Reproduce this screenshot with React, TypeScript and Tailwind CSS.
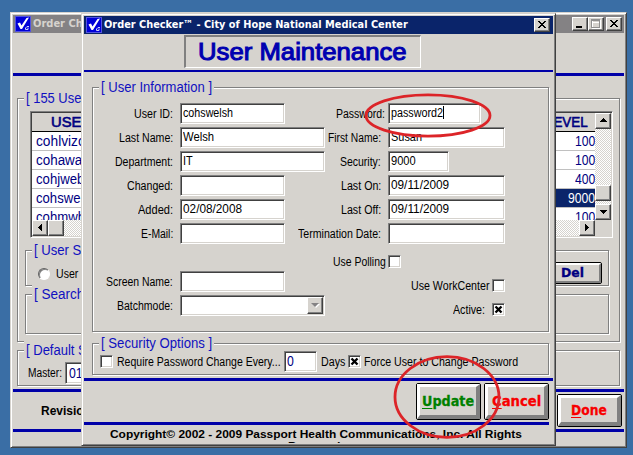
import { useLayoutEffect, useRef, type ReactNode } from "react";

/** Single line of text, condensed or stretched to a fixed width. */
function Fit({ w, className = "", children }: { w: number; className?: string; children: ReactNode }) {
  const ref = useRef<HTMLSpanElement>(null);
  useLayoutEffect(() => {
    const el = ref.current;
    if (el) el.style.transform = `scaleX(${w / el.offsetWidth})`;
  }, [w]);
  return (
    <span className={`inline-block shrink-0 whitespace-nowrap ${className}`} style={{ width: w }}>
      <span ref={ref} className="inline-block origin-left">
        {children}
      </span>
    </span>
  );
}

const sunken =
  "border border-t-[#808080] border-l-[#808080] border-r-white border-b-white shadow-[inset_1px_1px_0_#404040,inset_-1px_-1px_0_#d6d3ce]";
const raised =
  "bg-[#d6d3ce] border border-t-white border-l-white border-r-[#404040] border-b-[#404040] shadow-[inset_-1px_-1px_0_#808080]";
const frame =
  "bg-[#d6d3ce] border border-t-[#d6d3ce] border-l-[#d6d3ce] border-r-[#404040] border-b-[#404040] shadow-[inset_1px_1px_0_#fff,inset_-1px_-1px_0_#808080] p-[2px]";
const hatch = "bg-[repeating-conic-gradient(#fff_0_25%,#d6d3ce_0_50%)] bg-[length:2px_2px]";

function Group({ title, w, className = "", children }: { title?: string; w?: number; className?: string; children?: ReactNode }) {
  return (
    <div className={`relative shrink-0 border border-[#808080] shadow-[1px_1px_0_#fff,inset_1px_1px_0_#fff] ${className}`}>
      {title && (
        <div className="absolute -top-[10px] left-[6px] h-[18px] bg-[#d6d3ce] px-[2px] text-[14px] leading-[18px] text-[#1010c0]">
          <Fit w={w ?? 100}>{title}</Fit>
        </div>
      )}
      {children}
    </div>
  );
}

function Logo() {
  return (
    <svg width="16" height="16" viewBox="0 0 16 16" className="shrink-0">
      <rect width="16" height="16" fill="#0000d8" />
      <rect x=".5" y=".5" width="15" height="15" fill="none" stroke="#a8a8e8" strokeDasharray="1 1" />
      <path d="M2.5 7.5 L5 6.5 L6.5 9.5 L11.5 2 L14 1.5 L7 13 L5.5 13 Z" fill="#fff" />
      <path d="M14 10.5h-2l-1.5 1.5v1.5h2.5v-2" fill="none" stroke="#c8c8ff" />
    </svg>
  );
}

function CaptionButton({ kind }: { kind: "min" | "max" | "close" }) {
  return (
    <div className={`h-[14px] w-[16px] shrink-0 ${raised}`}>
      <svg width="14" height="12" viewBox="0 0 14 12" shapeRendering="crispEdges">
        {kind === "min" && <path d="M3 8h6v2H3z" fill="#000" />}
        {kind === "max" && (
          <>
            <path d="M3.5 2.5h8v8h-8zM3 4h9" fill="none" stroke="#fff" />
            <path d="M2.5 1.5h8v8h-8zM2 2.5h9" fill="none" stroke="#909090" />
          </>
        )}
        {kind === "close" && (
          <path
            d="M3 2h2v1h1v1h2v-1h1v-1h2v1h-1v1h-1v1h-1v1h1v1h1v1h1v1h-2v-1h-1v-1h-2v1h-1v1h-2v-1h1v-1h1v-1h1v-1h-1v-1h-1v-1h-1z"
            fill="#000"
          />
        )}
      </svg>
    </div>
  );
}

function ScrollButton({ d, className = "" }: { d?: string; className?: string }) {
  return (
    <div className={`h-[16px] w-[16px] shrink-0 ${raised} ${className}`}>
      {d && (
        <svg width="14" height="14" viewBox="0 0 14 14" shapeRendering="crispEdges">
          <path d={d} />
        </svg>
      )}
    </div>
  );
}

function Check({ on }: { on?: boolean }) {
  return (
    <div className={`h-[13px] w-[13px] shrink-0 bg-white ${sunken}`}>
      {on && (
        <svg width="11" height="11" viewBox="0 0 11 11">
          <path d="M2.5 2.5 L8.5 8.5 M8.5 2.5 L2.5 8.5" stroke="#000" strokeWidth="2.4" />
        </svg>
      )}
    </div>
  );
}

function Field({ box, value, vw = 0, caret }: { box: string; value?: string; vw?: number; caret?: boolean }) {
  return (
    <div className={`flex h-[21px] shrink-0 items-start bg-white pl-[2px] leading-[18px] ${sunken} ${box}`}>
      {value && <Fit w={vw}>{value}</Fit>}
      {caret && <span className="mt-[2px] h-[13px] w-px bg-black" />}
    </div>
  );
}

type Row = { label: string; lw: number; box: string; value?: string; vw?: number; caret?: boolean; nudge?: boolean };

const leftRows: Row[] = [
  { label: "User ID:", lw: 39, box: "w-[105px]", value: "cohswelsh", vw: 50 },
  { label: "Last Name:", lw: 54, box: "w-[145px]", value: "Welsh", vw: 31 },
  { label: "Department:", lw: 58, box: "w-[145px]", value: "IT", vw: 10 },
  { label: "Changed:", lw: 46, box: "w-[105px]" },
  { label: "Added:", lw: 35, box: "w-[105px]", value: "02/08/2008", vw: 59 },
  { label: "E-Mail:", lw: 32, box: "w-[105px]" },
];

const rightRows: Row[] = [
  { label: "Password:", lw: 49, box: "w-[93px]", value: "password2", vw: 52, caret: true, nudge: true },
  { label: "First Name:", lw: 53, box: "w-[117px]", value: "Susan", vw: 31 },
  { label: "Security:", lw: 41, box: "w-[61px]", value: "9000", vw: 25 },
  { label: "Last On:", lw: 40, box: "w-[117px]", value: "09/11/2009", vw: 58 },
  { label: "Last Off:", lw: 40, box: "w-[117px]", value: "09/11/2009", vw: 58 },
  { label: "Termination Date:", lw: 83, box: "w-[117px]" },
];

function FieldRow({ row, labelBox }: { row: Row; labelBox: string }) {
  return (
    <div className="flex h-[24px]">
      <div className={`flex shrink-0 justify-end leading-[22px] ${labelBox} ${row.nudge ? "mr-[3px] ml-[5px]" : "mr-[7px] ml-px"}`}>
        <Fit w={row.lw}>{row.label}</Fit>
      </div>
      <Field box={row.box} value={row.value} vw={row.vw} caret={row.caret} />
    </div>
  );
}

function BigButton({ text, w, className }: { text: string; w: number; className: string }) {
  return (
    <div className="shrink-0 rounded-[2px] border border-black">
      <div
        className={`flex items-center justify-center border-t-[3px] border-r-4 border-b-4 border-l-[3px] border-t-white border-r-[#808080] border-b-[#808080] border-l-white bg-[#d6d3ce] font-['DejaVu_Sans',sans-serif] text-[14px] font-bold [-webkit-text-stroke:0.3px] ${className}`}
      >
        <Fit w={w}>
          <span className="underline decoration-1 underline-offset-2">{text[0]}</span>
          {text.slice(1)}
        </Fit>
      </div>
    </div>
  );
}

const users = [
  { id: "cohlvizo", w: 50, level: "100", lw: 20 },
  { id: "cohawa", w: 46, level: "100", lw: 20 },
  { id: "cohjweb", w: 48, level: "400", lw: 20 },
  { id: "cohswe", w: 44, level: "9000", lw: 27, selected: true },
  { id: "cohmwh", w: 49, level: "100", lw: 20 },
];

function UserList() {
  return (
    <div className={`mt-[12px] ml-[12px] flex h-[127px] w-[583px] flex-col bg-[#d6d3ce] p-px ${sunken}`}>
      <div className="flex h-[107px]">
        <div className="flex h-[107px] flex-1 flex-col overflow-hidden bg-white text-[14px] text-[#000080]">
          <div className="flex h-[19px] shrink-0 justify-between border-b border-black bg-[#d6d3ce] pr-[7px] pl-[19px] leading-[18px] [-webkit-text-stroke:0.6px]">
            <Fit w={60}>USER ID</Fit>
            <Fit w={42}>LEVEL</Fit>
          </div>
          {users.map((u) => (
            <div key={u.id} className="flex h-[19px] shrink-0 border-b border-[#c0c0c0] leading-[19px]">
              <div className="w-[100px] pl-[4px]">
                <Fit w={u.w}>{u.id}</Fit>
              </div>
              <div className={`flex flex-1 justify-end ${u.selected ? "bg-[#0a246a] text-white" : ""}`}>
                <Fit w={u.lw}>{u.level}</Fit>
              </div>
            </div>
          ))}
        </div>
        <div className={`flex w-[16px] flex-col ${hatch}`}>
          <ScrollButton d="M4 8h7v-1h-1v-1h-1v-1h-1v-1h-1v1h-1v1h-1v1h-1z" />
          <ScrollButton className="mt-auto" />
          <ScrollButton className="mt-[3px]" d="M4 5h7v1h-1v1h-1v1h-1v1h-1v-1h-1v-1h-1v-1h-1z" />
        </div>
      </div>
      <div className="flex h-[16px]">
        <div className={`flex flex-1 ${hatch}`}>
          <ScrollButton d="M9 3v7h-1v-1h-1v-1h-1v-1h-1v-1h1v-1h1v-1h1v-1z" />
          <ScrollButton />
          <ScrollButton className="ml-auto" d="M5 3v7h1v-1h1v-1h1v-1h1v-1h-1v-1h-1v-1h-1v-1z" />
        </div>
        <div className="w-[16px]" />
      </div>
    </div>
  );
}

const caption = "flex h-[18px] shrink-0 items-center pl-[2px] text-white";
const captionFont = "font-['DejaVu_Sans',sans-serif] text-[11px] font-bold leading-[16px]";

function MainWindow() {
  return (
    <div className={`absolute top-[12px] left-[10px] flex h-[436px] w-[617px] flex-col ${frame}`}>
      <div className={`${caption} bg-[#848284] pr-[2px]`}>
        <Logo />
        <Fit w={90} className={`ml-[2px] text-[#d6d3ce] ${captionFont}`}>
          Order Checker™
        </Fit>
        <div className="ml-auto flex">
          <CaptionButton kind="min" />
          <CaptionButton kind="max" />
          <div className="w-[2px]" />
          <CaptionButton kind="close" />
        </div>
      </div>
      <div className="mt-[40px] h-[3px] shrink-0 bg-[#0000a8]" />
      <Group title="[ 155 Users ]" w={73} className="mx-[4px] mt-[22px] h-[244px]">
        <UserList />
        <Group title="[ User Search ]" w={87} className="mt-[12px] mr-[10px] ml-[7px] flex h-[36px]">
          <div className="mt-[17px] ml-[12px] h-[12px] w-[12px] rounded-full border border-t-[#606060] border-r-white border-b-white border-l-[#606060] bg-white shadow-[inset_1px_1px_0_#808080]" />
          <Fit w={22} className="mt-[12px] ml-[6px] leading-[22px]">
            User
          </Fit>
          <div className="mt-[11px] mr-[6px] ml-auto h-[22px] w-[60px] rounded-[2px] border border-black">
            <div className="flex h-[20px] items-center justify-center border-2 border-t-white border-r-[#808080] border-b-[#808080] border-l-white font-['DejaVu_Sans',sans-serif] text-[13px] font-bold text-[#000080] [-webkit-text-stroke:0.3px]">
              <Fit w={23}>Del</Fit>
            </div>
          </div>
        </Group>
        <Group title="[ Search ]" w={58} className="mt-[8px] mr-[10px] ml-[7px] h-[40px]" />
      </Group>
      <Group title="[ Default Settings ]" w={106} className="mx-[4px] mt-[8px] flex h-[36px]">
        <Fit w={34} className="mt-[11px] ml-[10px] leading-[22px]">
          Master:
        </Fit>
        <div className={`mt-[11px] ml-[3px] h-[22px] w-[60px] bg-white pl-[3px] text-[14px] leading-[20px] text-[#000080] ${sunken}`}>
          <Fit w={14}>01</Fit>
        </div>
      </Group>
      <div className="mt-[3px] h-[3px] shrink-0 bg-[#0000a8]" />
      <div className="flex h-[37px] shrink-0 items-center justify-between pr-[2px] pl-[28px]">
        <Fit w={54} className="font-bold">
          Revision:
        </Fit>
        <BigButton text="Done" w={36} className="h-[31px] w-[63px] text-[#f80000]" />
      </div>
      <div className="h-[3px] shrink-0 bg-[#0000a8]" />
    </div>
  );
}

function UserDialog() {
  return (
    <div className={`absolute top-[13px] left-[81px] flex h-[433px] w-[475px] flex-col ${frame}`}>
      <div className={`${caption} bg-[#0a246a] pr-[3px]`}>
        <Logo />
        <Fit w={304} className={`ml-[2px] ${captionFont}`}>
          Order Checker™ - City of Hope National Medical Center
        </Fit>
        <div className="ml-auto flex">
          <CaptionButton kind="close" />
        </div>
      </div>
      <div className="mt-px ml-[100px] flex h-[33px] w-[237px] shrink-0 items-center border-t-2 border-r border-b border-l-2 border-t-[#808080] border-r-white border-b-white border-l-[#808080] pl-[12px] text-[23px] leading-[30px] text-[#0000b0] [-webkit-text-stroke:1px]">
        <Fit w={209}>User Maintenance</Fit>
      </div>
      <div className="mt-[2px] h-[2px] shrink-0 bg-[#0000a8]" />
      <Group title="[ User Information ]" w={111} className="mr-[4px] ml-[8px] mt-[15px] flex h-[245px]">
        <div className="w-[232px] shrink-0 pt-[15px]">
          {leftRows.map((row) => (
            <FieldRow key={row.label} row={row} labelBox="w-[79px]" />
          ))}
          <div className="h-[24px]" />
          <FieldRow row={{ label: "Screen Name:", lw: 67, box: "w-[105px]" }} labelBox="w-[79px]" />
          <div className="flex h-[24px]">
            <div className="mr-[7px] flex w-[80px] justify-end leading-[22px]">
              <Fit w={56}>Batchmode:</Fit>
            </div>
            <div className={`flex h-[21px] w-[145px] shrink-0 justify-end bg-white p-px ${sunken}`}>
              <div className="flex h-[17px] w-[16px] items-center justify-center border border-t-white border-r-[#404040] border-b-[#404040] border-l-white bg-[#d6d3ce] shadow-[inset_-1px_-1px_0_#808080]">
                <svg width="9" height="5" viewBox="0 0 9 5">
                  <path d="M1.5 1h7.5l-4 4z" fill="#fff" />
                  <path d="M0 0h8l-4 4z" fill="#848284" />
                </svg>
              </div>
            </div>
          </div>
        </div>
        <div className="flex-1 pt-[15px]">
          {rightRows.map((row) => (
            <FieldRow key={row.label} row={row} labelBox="w-[55px]" />
          ))}
          <div className="ml-[8px] flex h-[24px] items-center pt-[5px]">
            <Fit w={53}>Use Polling</Fit>
            <span className="ml-[2px]">
              <Check />
            </span>
          </div>
          <div className="ml-[86px] flex h-[24px] items-center pt-[5px]">
            <Fit w={78}>Use WorkCenter</Fit>
            <span className="ml-[3px]">
              <Check />
            </span>
          </div>
          <div className="ml-[128px] flex h-[24px] items-center pt-[5px]">
            <Fit w={32}>Active:</Fit>
            <span className="ml-[7px]">
              <Check on />
            </span>
          </div>
        </div>
      </Group>
      <Group title="[ Security Options ]" w={111} className="mr-[4px] ml-[8px] mt-[11px] flex h-[32px] items-start pl-[7px]">
        <span className="mt-[11px]">
          <Check />
        </span>
        <Fit w={164} className="mt-[7px] ml-[4px] leading-[22px]">
          Require Password Change Every...
        </Fit>
        <div className={`mt-[7px] ml-[3px] h-[21px] w-[33px] bg-white pl-[2px] text-[14px] leading-[19px] text-[#000080] ${sunken}`}>
          <Fit w={7}>0</Fit>
        </div>
        <Fit w={24} className="mt-[7px] ml-[4px] leading-[22px]">
          Days
        </Fit>
        <span className="mt-[11px] ml-[3px]">
          <Check on />
        </span>
        <Fit w={154} className="mt-[7px] ml-[3px] leading-[22px]">
          Force User to Change Password
        </Fit>
      </Group>
      <div className="mt-[3px] h-[3px] shrink-0 bg-[#0000a8]" />
      <div className="flex h-[41px] shrink-0 items-start justify-end gap-[3px] pt-[2px] pr-[4px]">
        <BigButton text="Update" w={52} className="h-[35px] w-[63px] text-[#008000]" />
        <BigButton text="Cancel" w={49} className="h-[35px] w-[63px] text-[#f80000]" />
      </div>
      <div className="mr-[4px] h-[3px] shrink-0 bg-[#0000a8]" />
      <div className="flex h-[18px] shrink-0 flex-col items-center overflow-hidden pt-[3px] pr-[6px] text-[11px] leading-[12px] font-bold">
        <Fit w={412} className="h-[12px]">
          Copyright© 2002 - 2009 Passport Health Communications, Inc. All Rights
        </Fit>
        <Fit w={56} className="h-[12px]">
          Reserved.
        </Fit>
      </div>
    </div>
  );
}

export default function App() {
  return (
    <div className="relative h-[455px] w-[633px] overflow-hidden bg-[#3a6ea5] font-['Liberation_Sans',Arial,sans-serif] text-[12px] text-black">
      <MainWindow />
      <UserDialog />
      <svg className="absolute inset-0" width="633" height="455" fill="none" stroke="#dc2428" strokeWidth="2.8">
        <ellipse cx="428" cy="115.5" rx="62" ry="20.7" />
        <ellipse cx="447" cy="397" rx="52" ry="40.3" />
      </svg>
    </div>
  );
}
